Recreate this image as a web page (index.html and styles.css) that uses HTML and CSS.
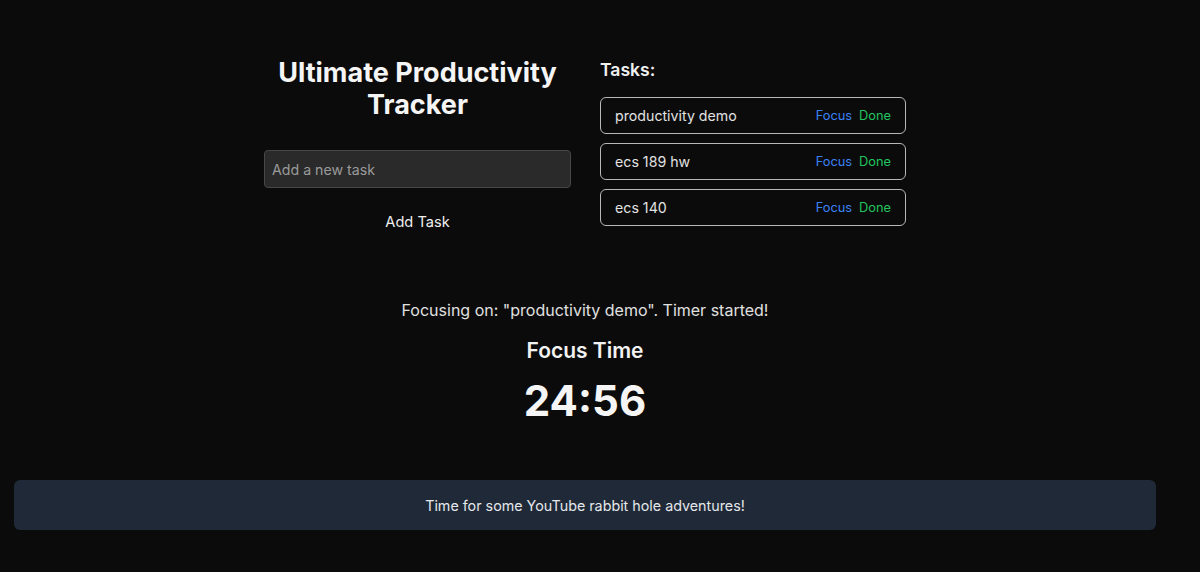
FILE: index.html
```html
<!DOCTYPE html>
<html lang="en">
<head>
<meta charset="utf-8">
<title>Ultimate Productivity Tracker</title>
<link rel="stylesheet" href="styles.css">
</head>
<body>
<div class="page">
  <div class="top">
    <div class="left">
      <h1 class="title">Ultimate Productivity Tracker</h1>
      <input class="task-input" type="text" placeholder="Add a new task">
      <button class="add-btn">Add Task</button>
    </div>
    <div class="right">
      <h2 class="tasks-heading">Tasks:</h2>
      <ul class="task-list">
        <li class="task"><span class="task-name">productivity demo</span><span class="actions"><span class="focus">Focus</span><span class="done">Done</span></span></li>
        <li class="task"><span class="task-name">ecs 189 hw</span><span class="actions"><span class="focus">Focus</span><span class="done">Done</span></span></li>
        <li class="task"><span class="task-name">ecs 140</span><span class="actions"><span class="focus">Focus</span><span class="done">Done</span></span></li>
      </ul>
    </div>
  </div>
  <div class="timer-section">
    <p class="status">Focusing on: "productivity demo". Timer started!</p>
    <h3 class="mode">Focus Time</h3>
    <div class="clock">24:56</div>
  </div>
  <div class="banner">Time for some YouTube rabbit hole adventures!</div>
</div>
</body>
</html>
```

FILE: styles.css
```css
html, body {
  margin: 0;
  padding: 0;
  background: #0b0b0b;
  color: #f2f2f2;
  font-family: Inter, "Noto Sans", sans-serif;
}

.page {
  width: 1170px;
  box-sizing: border-box;
  padding: 57px 14px 0;
}

.top {
  display: flex;
  justify-content: center;
  gap: 29px;
}

.left {
  width: 307px;
  display: flex;
  flex-direction: column;
  align-items: stretch;
}

.title {
  margin: 0;
  font-size: 27px;
  line-height: 32px;
  font-weight: 700;
  text-align: center;
  color: #f5f5f5;
}

.task-input {
  margin-top: 29px;
  height: 38px;
  box-sizing: border-box;
  background: #2a2a2a;
  border: 1px solid #474747;
  border-radius: 4px;
  padding: 0 7px;
  font-family: inherit;
  font-size: 14.2px;
  color: #eee;
  outline: none;
}

.task-input::placeholder {
  color: #9a9a9a;
}

.add-btn {
  margin-top: 15px;
  align-self: center;
  background: none;
  border: none;
  padding: 9px 12px 7px;
  font-family: inherit;
  font-size: 14.6px;
  line-height: 20px;
  color: #f0f0f0;
}

.right {
  width: 306px;
}

.tasks-heading {
  margin: 1px 0 0;
  font-size: 17.6px;
  line-height: 24px;
  font-weight: 600;
  color: #f0f0f0;
}

.task-list {
  list-style: none;
  margin: 15px 0 0;
  padding: 0;
  display: flex;
  flex-direction: column;
  gap: 9px;
}

.task {
  height: 37px;
  box-sizing: border-box;
  border: 1.5px solid #b8b8b8;
  border-radius: 6px;
  display: flex;
  align-items: center;
  justify-content: space-between;
  padding: 0 14px 0 14px;
}

.task-name {
  font-size: 14.2px;
  color: #e2e2e2;
}

.actions {
  display: flex;
  gap: 7px;
  font-size: 12.8px;
}

.focus {
  color: #3b82f6;
}

.done {
  color: #22c55e;
}

.timer-section {
  margin-top: 59px;
  text-align: center;
}

.status {
  margin: 0;
  font-size: 16px;
  line-height: 24px;
  color: #e0e0e0;
}

.mode {
  margin: 15px 0 0;
  font-size: 21px;
  line-height: 28px;
  font-weight: 600;
  color: #f2f2f2;
}

.clock {
  margin-top: 11px;
  font-size: 42px;
  line-height: 50px;
  font-weight: 700;
  color: #f5f5f5;
}

.banner {
  margin-top: 54px;
  height: 50px;
  background: #1f2937;
  border-radius: 6px;
  display: flex;
  align-items: center;
  justify-content: center;
  font-size: 14.3px;
  color: #e5e7eb;
}
```
